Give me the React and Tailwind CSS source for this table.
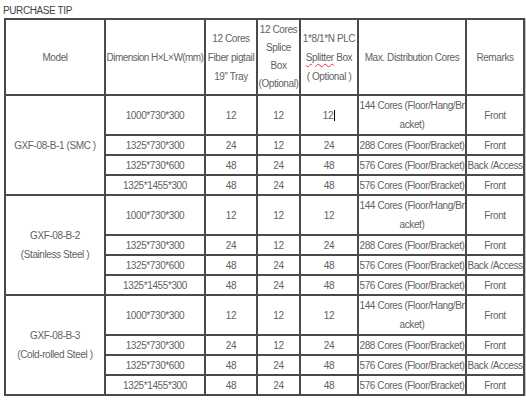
const groups = [
    { model: ["GXF-08-B-1 (SMC )"] },
    { model: ["GXF-08-B-2", "(Stainless Steel )"] },
    { model: ["GXF-08-B-3", "(Cold-rolled Steel )"] },
]

const rows = [
    { dim: "1000*730*300", tray: "12", splice: "12", plc: "12", max: ["144 Cores (Floor/Hang/Br", "acket)"], remark: "Front", tall: true },
    { dim: "1325*730*300", tray: "24", splice: "12", plc: "24", max: ["288 Cores (Floor/Bracket)"], remark: "Front" },
    { dim: "1325*730*600", tray: "48", splice: "24", plc: "48", max: ["576 Cores (Floor/Bracket)"], remark: "Back /Access" },
    { dim: "1325*1455*300", tray: "48", splice: "24", plc: "48", max: ["576 Cores (Floor/Bracket)"], remark: "Front" },
]

const cell = "border-2 border-[#4a4a4a] p-0 text-center align-middle whitespace-nowrap"

export default function App() {
    return (
        <div className="w-[526px] h-[400px] bg-white text-[10px] tracking-[-0.4px] text-[#626262] font-['Liberation_Sans',Arial,sans-serif] overflow-hidden">
            <p className="pl-[3px] pt-[5px] h-[18px] leading-[11px] text-[#444]">PURCHASE TIP</p>
            <table className="ml-[4px] border-collapse table-fixed w-[519px] leading-[19px] shadow-[1px_0_0_#c8c8c8]">
                <colgroup>
                    <col className="w-[100px]" />
                    <col className="w-[100px]" />
                    <col className="w-[52px]" />
                    <col className="w-[43px]" />
                    <col className="w-[58px]" />
                    <col className="w-[108px]" />
                    <col className="w-[58px]" />
                </colgroup>
                <thead>
                    <tr className="h-[76px]">
                        <td className={cell}>Model</td>
                        <td className={cell + " tracking-[-0.55px]"}>Dimension H×L×W(mm)</td>
                        <td className={cell}>12 Cores<br />Fiber pigtail<br />19'' Tray</td>
                        <td className={cell + " leading-[18px]"}>12 Cores<br />Splice<br />Box<br />(Optional)</td>
                        <td className={cell}>
                            1*8/1*N PLC<br />
                            <span className="underline decoration-wavy decoration-red-500 decoration-1 underline-offset-2">Splitter</span> Box<br />
                            ( Optional )
                        </td>
                        <td className={cell}>Max. Distribution Cores</td>
                        <td className={cell}>Remarks</td>
                    </tr>
                </thead>
                <tbody>
                    {groups.map((g, gi) =>
                        rows.map((r, ri) => (
                            <tr key={gi + "-" + ri} className={r.tall ? "h-[40px]" : "h-[20px] leading-[15px]"}>
                                {ri === 0 && (
                                    <td rowSpan={4} className={cell}>
                                        {g.model.map((m, i) => (
                                            <div key={i}>{m}</div>
                                        ))}
                                    </td>
                                )}
                                <td className={cell}>{r.dim}</td>
                                <td className={cell}>{r.tray}</td>
                                <td className={cell}>{r.splice}</td>
                                <td className={cell}>
                                    {r.plc}
                                    {gi === 0 && ri === 0 && (
                                        <span className="inline-block w-px h-[11px] bg-black align-middle ml-px" />
                                    )}
                                </td>
                                <td className={cell + " overflow-visible"}>
                                    {r.max.map((m, i) => (
                                        <div key={i} className={r.tall ? "leading-[19px]" : ""}>{m}</div>
                                    ))}
                                </td>
                                <td className={cell + " overflow-visible"}>{r.remark}</td>
                            </tr>
                        ))
                    )}
                </tbody>
            </table>
        </div>
    );
}
